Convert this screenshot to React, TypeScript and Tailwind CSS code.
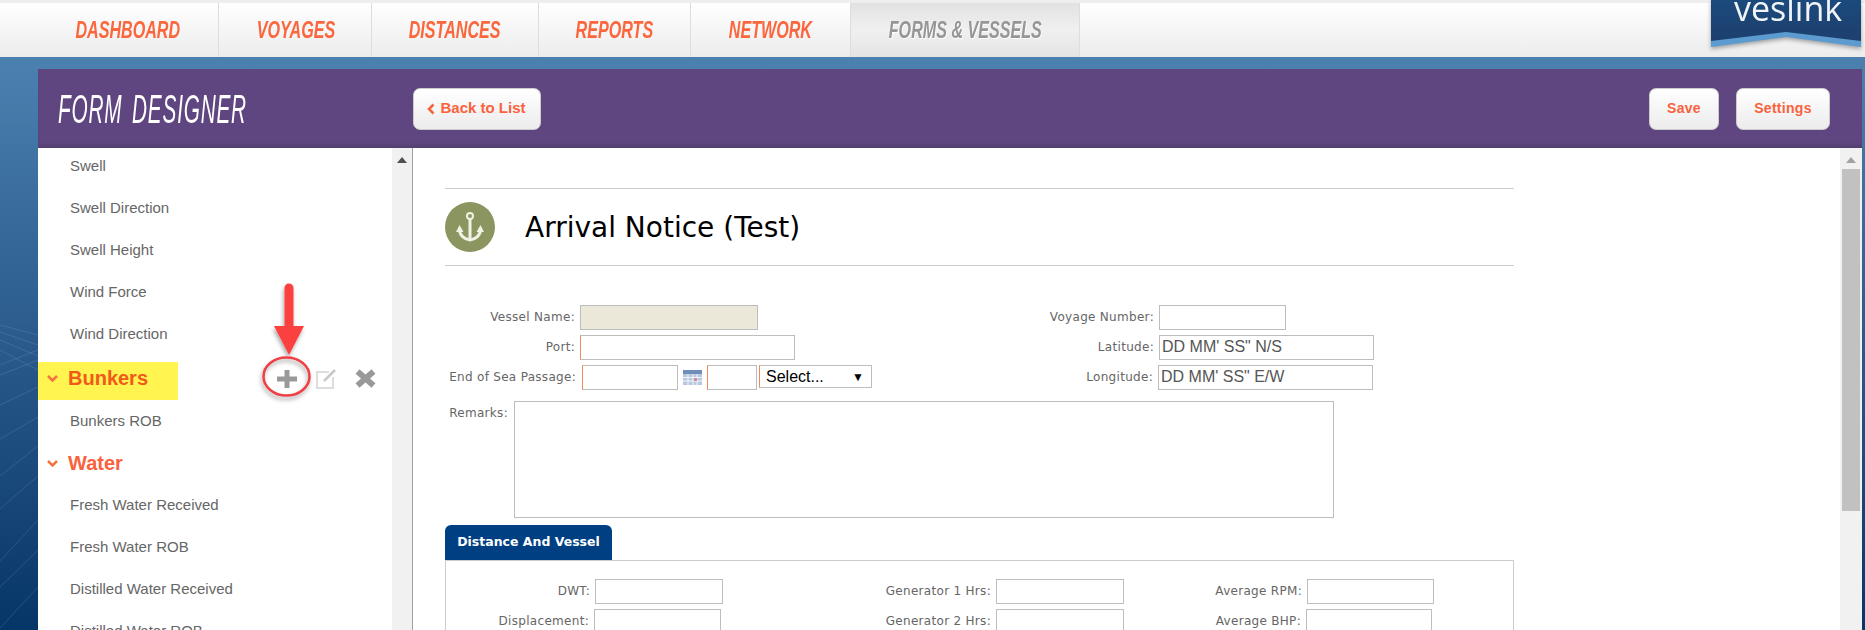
import type { ReactNode } from "react";

const tabs = [
  { text: "DASHBOARD", w: "w-[219px] pl-[38px]" },
  { text: "VOYAGES", w: "w-[153px] pl-[3px]" },
  { text: "DISTANCES", w: "w-[167px]" },
  { text: "REPORTS", w: "w-[152px]" },
  { text: "NETWORK", w: "w-[160px]" },
];

const LABEL = "text-[12px] text-[#666] text-right leading-[25px] shrink-0 font-['DejaVu_Sans',sans-serif] tracking-[.3px]";
const BOX = "h-[25px] border border-[#bdbdbd] bg-white shrink-0";
const REQUIRED = "border-l-[#f08a5d]";

const Field = ({ label, labelW, boxW, text, className = "" }: { label: string; labelW: string; boxW: string; text?: string; className?: string }) => (
  <div className="flex h-[25px] items-start gap-[5px]">
    <span className={`${LABEL} ${labelW}`}>{label}</span>
    <div className={`${BOX} ${boxW} ${className} text-[16px] text-[#555] leading-[22px] pl-[2px] font-['Liberation_Sans',sans-serif]`}>{text}</div>
  </div>
);

const Item = ({ text }: { text: string }) => (
  <div className="h-[42px] pl-[32px] flex items-center text-[15px] text-[#666]">{text}</div>
);

const Section = ({ text, highlight }: { text: string; highlight?: boolean }) => (
  <div className={`h-[38px] flex items-center pl-[9px] gap-[10px] text-[20px] font-bold ${highlight ? "w-[140px] bg-[#fff450] text-[#f05a1a] pb-[6px]" : "text-[#f9623c]"}`}>
    <svg width="11" height="7" viewBox="0 0 11 7"><path d="M1 1l4.5 4.5L10 1" fill="none" stroke="#f5733f" strokeWidth="2.5" /></svg>
    {text}
  </div>
);

const Button = ({ children, className = "" }: { children: ReactNode; className?: string }) => (
  <button className={`h-[42px] rounded-[7px] border border-[#ccc] bg-gradient-to-b from-white to-[#ececec] font-bold text-[#f9623c] flex items-center justify-center ${className}`}>
    {children}
  </button>
);

const App = () => {
  return (
    <div className="relative h-[630px] w-[1865px] overflow-hidden bg-gradient-to-b from-[#5289b7] to-[#063567] font-['Liberation_Sans',sans-serif]">
      <svg className="absolute left-0 top-[320px]" width="38" height="310" viewBox="0 0 38 310">
        <g stroke="#9cc0dc" strokeOpacity=".18" fill="none">
          <path d="M0 5L38 15M0 12L38 25M0 20L38 36M0 30L38 50M0 45L38 30M0 55L38 40" />
          <path d="M38 67L0 85M38 97L0 119M38 126L0 156M38 156L0 189M38 200L0 241M38 230L0 267M38 267L0 308" />
        </g>
      </svg>

      <header className="relative h-[57px] border-t-[3px] border-[#eeeeee] bg-gradient-to-b from-white to-[#ececec] flex">
        {tabs.map((t) => (
          <div key={t.text} className={`${t.w} flex items-center justify-center border-r border-[#dddddd] italic font-bold text-[23px] text-[#fb663c]`}>
            <span className="scale-x-[.7]">{t.text}</span>
          </div>
        ))}
        <div className="w-[229px] flex items-center justify-center border-r border-[#dddddd] bg-gradient-to-b from-[#e2e2e2] via-[#f0f0f0] to-[#e4e4e4] italic font-bold text-[23px] text-[#969696] [text-shadow:1px_1px_1px_#fff]">
          <span className="scale-x-[.7] whitespace-nowrap">FORMS &amp; VESSELS</span>
        </div>
      </header>

      <div className="absolute right-[4px] top-0 h-[48px] w-[150px] overflow-hidden drop-shadow-[0_2px_2px_rgba(0,0,0,.35)]">
        <svg className="absolute inset-0" width="150" height="48" viewBox="0 0 150 48">
          <defs>
            <linearGradient id="logo" x1="0" y1="0" x2="0" y2="1">
              <stop offset="0" stopColor="#1b4a7c" />
              <stop offset="1" stopColor="#1d3f6e" />
            </linearGradient>
          </defs>
          <path d="M0 0H150V47L75 37L0 47Z" fill="#5b9bcf" />
          <path d="M0 0H150V41L75 32L0 41Z" fill="url(#logo)" />
        </svg>
        <span className="absolute left-[23px] top-[-12px] text-[34px] leading-[40px] text-[#f0f4f8] font-['Open_Sans',sans-serif]">veslink</span>
      </div>

      <div className="ml-[38px] mr-[3px] mt-[12px]">
        <div className="h-[79px] bg-[#5f4680] flex items-center shadow-[inset_0_-4px_4px_-2px_rgba(0,0,0,.15)]">
          <div className="w-[375px] pl-[20px] shrink-0">
            <h1 className="origin-left scale-x-[.52] italic text-[40px] tracking-[1.500px] [word-spacing:6px] text-white whitespace-nowrap">FORM DESIGNER</h1>
          </div>
          <Button className="w-[128px] gap-[5px] pr-[1px] text-[15px]">
            <svg width="8" height="12" viewBox="0 0 8 12"><path d="M6.500 1.500L2 6l4.500 4.500" fill="none" stroke="#f9623c" strokeWidth="2.500" /></svg>
            Back to List
          </Button>
          <div className="ml-auto mr-[32px] flex gap-[17px]">
            <Button className="w-[70px] text-[14px] tracking-[.3px]">Save</Button>
            <Button className="w-[94px] text-[14px] tracking-[.3px]">Settings</Button>
          </div>
        </div>

        <div className="flex h-[482px] bg-white overflow-hidden">
          <aside className="relative w-[354px] shrink-0 overflow-hidden">
            <div className="-mt-[3px]">
              <Item text="Swell" />
              <Item text="Swell Direction" />
              <Item text="Swell Height" />
              <Item text="Wind Force" />
              <Item text="Wind Direction" />
              <div className="mt-[7px]"><Section text="Bunkers" highlight /></div>
              <Item text="Bunkers ROB" />
              <div className="mt-[2px]"><Section text="Water" /></div>
              <div className="mt-[2px]"><Item text="Fresh Water Received" /></div>
              <Item text="Fresh Water ROB" />
              <Item text="Distilled Water Received" />
              <Item text="Distilled Water ROB" />
            </div>

            <div className="absolute left-[239px] top-[220px] flex items-center gap-[19px]">
              <svg width="20" height="18" viewBox="0 0 20 18"><path d="M7.500 0h5v6.500H20v5h-7.500V18h-5v-6.500H0v-5h7.500z" fill="#999" /></svg>
              <svg width="21" height="20" viewBox="0 0 21 20" fill="none">
                <path d="M13 3H1v16h16V8" stroke="#d2d2d2" strokeWidth="1.500" />
                <path d="M8 12L19 1" stroke="#c8c8c8" strokeWidth="2.500" />
              </svg>
              <svg className="-ml-[2px]" width="23" height="21" viewBox="0 0 23 21"><path d="M3.500 3.500L19.500 17.500M19.500 3.500L3.500 17.500" stroke="#999" strokeWidth="6" /></svg>
            </div>
            <svg className="absolute left-[200px] top-[120px] overflow-visible" width="70" height="130" viewBox="0 0 70 130">
              <defs>
                <filter id="sh" x="-30%" y="-30%" width="160%" height="160%">
                  <feDropShadow dx="-1" dy="3" stdDeviation="2" floodColor="#000" floodOpacity=".35" />
                </filter>
              </defs>
              <g filter="url(#sh)">
                <path d="M51 20V60" stroke="#fb4040" strokeWidth="9" strokeLinecap="round" />
                <path d="M36 58H66L51 87Z" fill="#fb4040" />
                <ellipse cx="48.500" cy="108.500" rx="23" ry="19" fill="none" stroke="#ee3f45" strokeWidth="2.500" />
              </g>
            </svg>
          </aside>

          <div className="w-[21px] shrink-0 bg-[#f1f1f1] border-r border-[#a0a0a0] pt-[9px] flex justify-center">
            <div className="h-0 w-0 border-x-[5px] border-b-[6px] border-x-transparent border-b-[#505050]" />
          </div>

          <main className="flex-1 pl-[32px] pt-[40px] overflow-hidden">
            <div className="w-[1069px] border-y border-[#cccccc] h-[78px] flex items-center">
              <div className="h-[50px] w-[50px] rounded-full bg-[#8a9560] flex items-center justify-center">
                <svg width="28" height="31" viewBox="0 0 28 31" fill="none" stroke="#f0f2e6">
                  <circle cx="14" cy="4" r="3" strokeWidth="2" />
                  <path d="M14 7V28" strokeWidth="3" />
                  <path d="M3.500 17C3.500 24 9 27.500 14 28C19 27.500 24.500 24 24.500 17" strokeWidth="3" />
                  <path d="M0 20L3.500 13L7.500 20ZM20.500 20L24.500 13L28 20Z" fill="#f0f2e6" stroke="none" />
                </svg>
              </div>
              <h2 className="ml-[30px] mt-[1px] text-[28px] text-black font-['DejaVu_Sans',sans-serif]">Arrival Notice (Test)</h2>
            </div>

            <div className="mt-[39px] flex">
              <div className="w-[556px] flex flex-col gap-[5px]">
                <Field label="Vessel Name:" labelW="w-[130px]" boxW="w-[178px] !bg-[#ebe8da]" />
                <Field label="Port:" labelW="w-[130px]" boxW="w-[215px]" className={REQUIRED} />
                <div className="flex items-start">
                  <span className={`${LABEL} w-[131px]`}>End of Sea Passage:</span>
                  <div className={`${BOX} ${REQUIRED} ml-[6px] w-[96px]`} />
                  <svg className="ml-[5px] mt-[5px]" width="19" height="15" viewBox="0 0 19 15">
                    <rect width="19" height="15" fill="#b8c8e0" />
                    <rect width="19" height="4" fill="#6d8fb8" />
                    <path d="M0 7.500H19M0 11H19M5 4V15M10 4V15M14 4V15" stroke="#fff" strokeOpacity=".8" />
                    <rect x="11" y="8" width="3" height="3" fill="#d08a9a" />
                  </svg>
                  <div className={`${BOX} ${REQUIRED} ml-[5px] w-[50px]`} />
                  <div className={`${BOX} ${REQUIRED} ml-[2px] !h-[23px] w-[113px] flex items-center justify-between pl-[6px] pr-[7px] text-[16px] text-black`}>
                    Select...
                    <span className="text-[12px]">▼</span>
                  </div>
                </div>
              </div>
              <div className="flex flex-col gap-[5px]">
                <Field label="Voyage Number:" labelW="w-[153px]" boxW="w-[127px]" />
                <Field label="Latitude:" labelW="w-[153px]" boxW="w-[215px]" text={`DD MM' SS" N/S`} />
                <Field label="Longitude:" labelW="w-[152px]" boxW="w-[215px]" text={`DD MM' SS" E/W`} />
              </div>
            </div>

            <div className="mt-[11px] flex items-start">
              <span className={`${LABEL} w-[63px]`}>Remarks:</span>
              <div className="ml-[6px] h-[117px] w-[820px] border border-[#bdbdbd]" />
            </div>

            <div className="mt-[7px] h-[35px] w-[167px] rounded-t-[6px] bg-[#003f82] flex items-center justify-center text-[12.500px] font-bold text-white font-['DejaVu_Sans',sans-serif]">
              Distance And Vessel
            </div>
            <div className="w-[1069px] h-[200px] border-x border-t border-[#cccccc] pt-[18px] flex">
              <div className="w-[439px] flex flex-col gap-[5px]">
                <Field label="DWT:" labelW="w-[144px]" boxW="w-[128px]" />
                <Field label="Displacement:" labelW="w-[143px]" boxW="w-[127px]" />
              </div>
              <div className="w-[316px] flex flex-col gap-[5px]">
                <Field label="Generator 1 Hrs:" labelW="w-[106px]" boxW="w-[128px]" />
                <Field label="Generator 2 Hrs:" labelW="w-[106px]" boxW="w-[128px]" />
              </div>
              <div className="flex flex-col gap-[5px]">
                <Field label="Average RPM:" labelW="w-[101px]" boxW="w-[127px]" />
                <Field label="Average BHP:" labelW="w-[100px]" boxW="w-[126px]" />
              </div>
            </div>
          </main>

          <div className="w-[22px] shrink-0 bg-[#f1f1f1] flex flex-col items-center pt-[9px]">
            <div className="h-0 w-0 border-x-[5px] border-b-[6px] border-x-transparent border-b-[#a3a3a3]" />
            <div className="mt-[6px] h-[342px] w-[18px] bg-[#c1c1c1]" />
          </div>
        </div>
      </div>
    </div>
  );
};

export default App;
